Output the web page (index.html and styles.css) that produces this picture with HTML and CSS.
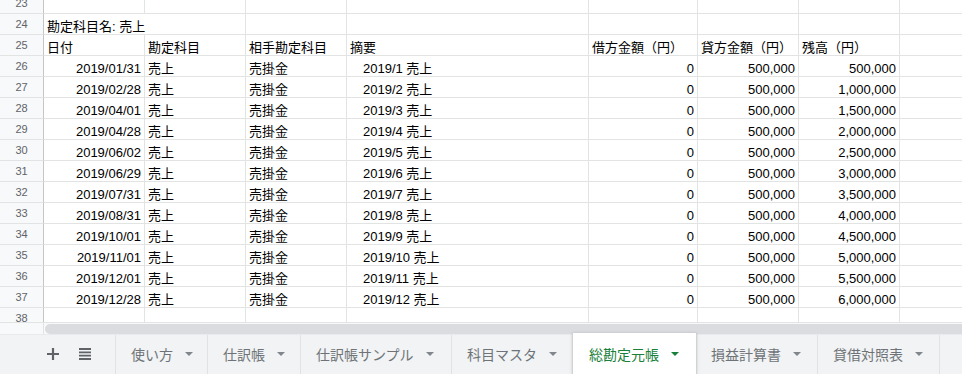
FILE: index.html
```html
<!DOCTYPE html>
<html lang="ja">
<head>
<meta charset="utf-8">
<link rel="stylesheet" href="styles.css">
</head>
<body>
<div class="app">
  <div class="viewport">
    <div class="grid">
      <div class="rh">23</div><div class="c"></div><div class="c"></div><div class="c"></div><div class="c"></div><div class="c"></div><div class="c"></div><div class="c"></div><div class="c last"></div>
      <div class="rh">24</div><div class="c span2">勘定科目名: 売上</div><div class="c"></div><div class="c"></div><div class="c"></div><div class="c"></div><div class="c"></div><div class="c last"></div>
      <div class="rh">25</div><div class="c">日付</div><div class="c">勘定科目</div><div class="c">相手勘定科目</div><div class="c">摘要</div><div class="c">借方金額（円）</div><div class="c">貸方金額（円）</div><div class="c">残高（円）</div><div class="c last"></div>
      <div class="rh">26</div><div class="c r">2019/01/31</div><div class="c">売上</div><div class="c">売掛金</div><div class="c ind">2019/1 売上</div><div class="c r">0</div><div class="c r">500,000</div><div class="c r">500,000</div><div class="c last"></div>
      <div class="rh">27</div><div class="c r">2019/02/28</div><div class="c">売上</div><div class="c">売掛金</div><div class="c ind">2019/2 売上</div><div class="c r">0</div><div class="c r">500,000</div><div class="c r">1,000,000</div><div class="c last"></div>
      <div class="rh">28</div><div class="c r">2019/04/01</div><div class="c">売上</div><div class="c">売掛金</div><div class="c ind">2019/3 売上</div><div class="c r">0</div><div class="c r">500,000</div><div class="c r">1,500,000</div><div class="c last"></div>
      <div class="rh">29</div><div class="c r">2019/04/28</div><div class="c">売上</div><div class="c">売掛金</div><div class="c ind">2019/4 売上</div><div class="c r">0</div><div class="c r">500,000</div><div class="c r">2,000,000</div><div class="c last"></div>
      <div class="rh">30</div><div class="c r">2019/06/02</div><div class="c">売上</div><div class="c">売掛金</div><div class="c ind">2019/5 売上</div><div class="c r">0</div><div class="c r">500,000</div><div class="c r">2,500,000</div><div class="c last"></div>
      <div class="rh">31</div><div class="c r">2019/06/29</div><div class="c">売上</div><div class="c">売掛金</div><div class="c ind">2019/6 売上</div><div class="c r">0</div><div class="c r">500,000</div><div class="c r">3,000,000</div><div class="c last"></div>
      <div class="rh">32</div><div class="c r">2019/07/31</div><div class="c">売上</div><div class="c">売掛金</div><div class="c ind">2019/7 売上</div><div class="c r">0</div><div class="c r">500,000</div><div class="c r">3,500,000</div><div class="c last"></div>
      <div class="rh">33</div><div class="c r">2019/08/31</div><div class="c">売上</div><div class="c">売掛金</div><div class="c ind">2019/8 売上</div><div class="c r">0</div><div class="c r">500,000</div><div class="c r">4,000,000</div><div class="c last"></div>
      <div class="rh">34</div><div class="c r">2019/10/01</div><div class="c">売上</div><div class="c">売掛金</div><div class="c ind">2019/9 売上</div><div class="c r">0</div><div class="c r">500,000</div><div class="c r">4,500,000</div><div class="c last"></div>
      <div class="rh">35</div><div class="c r">2019/11/01</div><div class="c">売上</div><div class="c">売掛金</div><div class="c ind">2019/10 売上</div><div class="c r">0</div><div class="c r">500,000</div><div class="c r">5,000,000</div><div class="c last"></div>
      <div class="rh">36</div><div class="c r">2019/12/01</div><div class="c">売上</div><div class="c">売掛金</div><div class="c ind">2019/11 売上</div><div class="c r">0</div><div class="c r">500,000</div><div class="c r">5,500,000</div><div class="c last"></div>
      <div class="rh">37</div><div class="c r">2019/12/28</div><div class="c">売上</div><div class="c">売掛金</div><div class="c ind">2019/12 売上</div><div class="c r">0</div><div class="c r">500,000</div><div class="c r">6,000,000</div><div class="c last"></div>
      <div class="rh">38</div><div class="c"></div><div class="c"></div><div class="c"></div><div class="c"></div><div class="c"></div><div class="c"></div><div class="c"></div><div class="c last"></div>
    </div>
  </div>
  <div class="hscroll"><div class="corner"></div><div class="thumb"></div></div>
  <div class="tabbar">
    <div class="tools">
      <svg class="ico" width="12" height="12" viewBox="0 0 12 12"><path d="M6 0v12M0 6h12" stroke="#5f6368" stroke-width="2.2" fill="none"/></svg>
      <svg class="ico" width="12" height="12" viewBox="0 0 12 12"><path d="M0 1h12M0 4.33h12M0 7.67h12M0 11h12" stroke="#5f6368" stroke-width="1.8" fill="none"/></svg>
    </div>
    <div class="tab w92"><span>使い方</span><i class="arrow"></i></div>
    <div class="tab w93"><span>仕訳帳</span><i class="arrow"></i></div>
    <div class="tab w151"><span>仕訳帳サンプル</span><i class="arrow"></i></div>
    <div class="tab w122"><span>科目マスタ</span><i class="arrow"></i></div>
    <div class="tab w123 active"><span>総勘定元帳</span><i class="arrow"></i></div>
    <div class="tab w121"><span>損益計算書</span><i class="arrow"></i></div>
    <div class="tab w122"><span>貸借対照表</span><i class="arrow"></i></div>
    <div class="tab filler"></div>
  </div>
</div>
</body>
</html>
```
FILE: styles.css
```css
html, body {
  margin: 0;
  padding: 0;
  background: #fff;
}
body {
  font-family: "Liberation Sans", Arial, "Noto Sans CJK JP", sans-serif;
  width: 962px;
  height: 374px;
  overflow: hidden;
}
.app {
  display: flex;
  flex-direction: column;
  height: 374px;
}
.viewport {
  height: 323px;
  box-sizing: border-box;
  border-bottom: 1px solid #e2e3e3;
  overflow: hidden;
  flex: none;
}
.grid {
  display: grid;
  grid-template-columns: 44px 101px 101px 101px 242px 109px 101px 101px 1fr;
  grid-auto-rows: 21px;
  margin-top: -7px;
}
.rh {
  box-sizing: border-box;
  background: #f8f9fa;
  border-right: 1px solid #c4c7c5;
  border-bottom: 1px solid #e2e3e3;
  color: #5f6368;
  font-size: 11px;
  display: flex;
  align-items: center;
  justify-content: center;
}
.c {
  box-sizing: border-box;
  border-right: 1px solid #e2e3e3;
  border-bottom: 1px solid #e2e3e3;
  font-size: 13px;
  line-height: 15px;
  color: #000;
  padding: 0 3px;
  display: flex;
  align-items: flex-end;
  white-space: nowrap;
  overflow: visible;
}
.c.span2 {
  grid-column: span 2;
}
.c.r {
  justify-content: flex-end;
}
.c.ind {
  padding-left: 16px;
}
.c.last {
  border-right: none;
}
.hscroll {
  height: 11px;
  flex: none;
  display: flex;
  background: #f8f9fa;
}
.corner {
  width: 44px;
  flex: none;
  box-sizing: border-box;
  border-right: 1px solid #e2e3e3;
}
.thumb {
  flex: 1;
  margin: 1px 0 0 1px;
  height: 10px;
  background: #dadce0;
  border-radius: 5px 0 0 5px;
}
.tabbar {
  flex: 1;
  display: flex;
  background: #f1f3f4;
  border-top: 1px solid #e8eaed;
  box-sizing: border-box;
}
.tools {
  width: 115px;
  flex: none;
  display: flex;
  align-items: center;
  padding: 0 0 2px 47px;
  box-sizing: border-box;
  gap: 20px;
}
.ico {
  display: block;
}
.tab {
  display: flex;
  align-items: center;
  padding: 0 0 2px 15px;
  border-left: 1px solid #e0e2e4;
  box-sizing: border-box;
  flex: none;
  font-size: 14px;
  color: #6f7378;
  white-space: nowrap;
}
.w92 { width: 92px; }
.w93 { width: 93px; }
.w151 { width: 151px; }
.w122 { width: 122px; }
.w123 { width: 123px; }
.w121 { width: 121px; }
.tab span {
  font-family: "Noto Sans CJK JP", sans-serif;
  font-size: 14px;
  line-height: 16px;
}
.arrow {
  display: block;
  width: 0;
  height: 0;
  margin-left: 12px;
  border-left: 4px solid transparent;
  border-right: 4px solid transparent;
  border-top: 4px solid #80868b;
}
.tab.active {
  background: #fff;
  color: #188038;
  margin-top: -2px;
  padding: 0 0 0 16px;
  border-left: none;
  box-shadow: 0 1px 3px 1px rgba(60, 64, 67, 0.15), 0 1px 2px rgba(60, 64, 67, 0.3);
  position: relative;
}
.tab.active .arrow {
  border-top-color: #188038;
}
.tab.active + .tab {
  border-left: none;
}
.tab.filler {
  flex: 1;
  padding: 0;
}
```
